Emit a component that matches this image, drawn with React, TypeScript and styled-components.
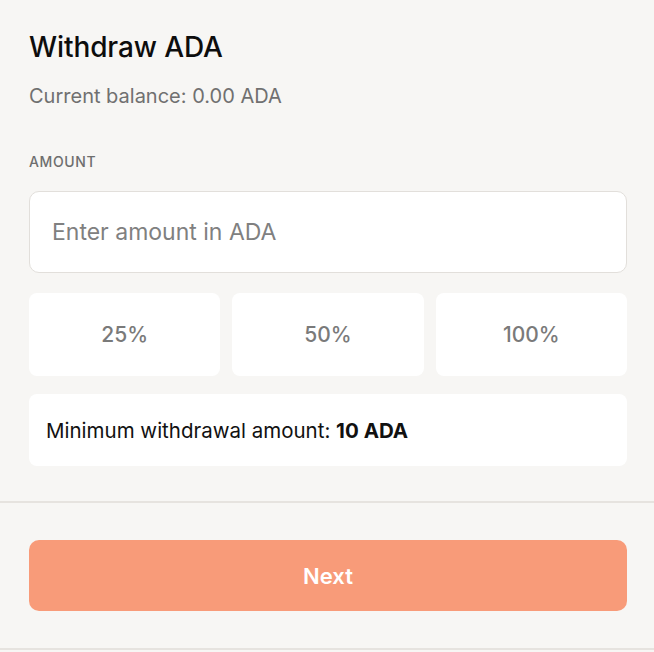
import React from "react";
import styled, { createGlobalStyle } from "styled-components";

const GlobalStyle = createGlobalStyle`
  html, body {
    margin: 0;
    padding: 0;
    background: #f7f6f4;
  }
  body {
    font-family: Inter, "Noto Sans", "Liberation Sans", sans-serif;
    -webkit-font-smoothing: antialiased;
  }
  * { box-sizing: border-box; }
`;

const Page = styled.div`
  width: 654px;
  height: 650px;
  background: #f7f6f4;
  display: flex;
  flex-direction: column;
  border-bottom: 2px solid #e6e3df;
`;

const Body = styled.div`
  padding: 29px 27px 0 29px;
  display: flex;
  flex-direction: column;
`;

const Title = styled.h1`
  margin: 0;
  font-size: 28px;
  line-height: 36px;
  font-weight: 500;
  color: #0d0d0d;
  letter-spacing: -0.1px;
`;

const Balance = styled.p`
  margin: 18px 0 0;
  font-size: 20px;
  line-height: 26px;
  color: #707070;
`;

const Label = styled.div`
  margin-top: 44px;
  font-size: 14px;
  line-height: 18px;
  font-weight: 500;
  color: #6e6e6e;
  letter-spacing: 0.6px;
  text-transform: uppercase;
`;

const AmountInput = styled.input`
  margin-top: 20px;
  width: 100%;
  height: 82px;
  border: 1px solid #e2dfdb;
  border-radius: 10px;
  background: #fff;
  padding: 0 22px;
  font-family: inherit;
  font-size: 23px;
  color: #222;
  outline: none;
  &::placeholder {
    color: #808080;
  }
`;

const Presets = styled.div`
  margin-top: 20px;
  display: grid;
  grid-template-columns: repeat(3, 1fr);
  gap: 12px;
`;

const PresetButton = styled.button`
  height: 83px;
  border: none;
  border-radius: 8px;
  background: #fff;
  font-family: inherit;
  font-size: 21px;
  font-weight: 500;
  color: #7a7a7a;
  cursor: pointer;
`;

const Info = styled.div`
  margin-top: 18px;
  height: 72px;
  border-radius: 8px;
  background: #fff;
  display: flex;
  align-items: center;
  padding: 0 17px;
  font-size: 20.5px;
  color: #111;
  b { font-weight: 700; }
`;

const Divider = styled.hr`
  margin: 35px 0 0;
  border: none;
  border-top: 2px solid #e6e3df;
  width: 100%;
`;

const Footer = styled.div`
  padding: 37px 27px 0 29px;
`;

const NextButton = styled.button`
  width: 100%;
  height: 71px;
  border: none;
  border-radius: 10px;
  background: #f89b79;
  color: #fff;
  font-family: inherit;
  font-size: 22px;
  font-weight: 600;
  cursor: pointer;
`;

export default function App() {
  return (
    <>
      <GlobalStyle />
      <Page>
        <Body>
          <Title>Withdraw ADA</Title>
          <Balance>Current balance: 0.00 ADA</Balance>
          <Label>Amount</Label>
          <AmountInput placeholder="Enter amount in ADA" />
          <Presets>
            <PresetButton>25%</PresetButton>
            <PresetButton>50%</PresetButton>
            <PresetButton>100%</PresetButton>
          </Presets>
          <Info>
            <span>
              Minimum withdrawal amount: <b>10 ADA</b>
            </span>
          </Info>
        </Body>
        <Divider />
        <Footer>
          <NextButton>Next</NextButton>
        </Footer>
      </Page>
    </>
  );
}
